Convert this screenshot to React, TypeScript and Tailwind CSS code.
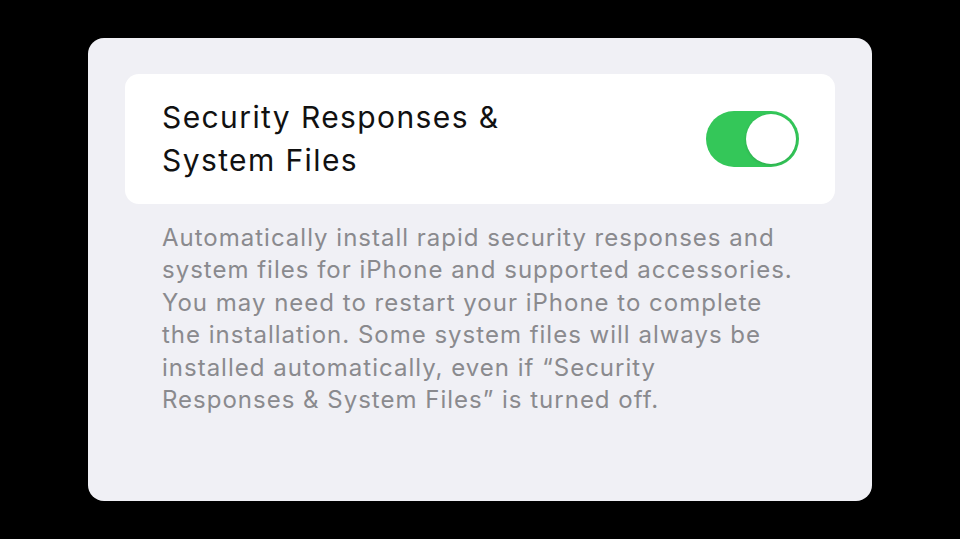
import { useState } from 'react';

function Toggle({ on, onChange }: { on: boolean; onChange: (v: boolean) => void }) {
  return (
    <button
      type="button"
      onClick={() => onChange(!on)}
      className={`relative flex h-[56px] w-[93px] shrink-0 items-center rounded-full p-[3px] transition-colors ${
        on ? 'bg-[#34c759] justify-end' : 'bg-[#e5e5ea] justify-start'
      }`}
    >
      <span className="block h-[50px] w-[50px] rounded-full bg-white shadow-[0_1px_3px_rgba(0,0,0,0.15)]" />
    </button>
  );
}

export default function App() {
  const [enabled, setEnabled] = useState(true);

  return (
    <div className="flex h-[539px] w-[960px] items-start justify-center bg-black pt-[38px]" style={{ fontFamily: 'Inter, "Noto Sans", sans-serif' }}>
      <div className="h-[463px] w-[784px] rounded-[16px] bg-[#f0f0f5] px-[37px] pt-[36px]">
        <div className="flex h-[130px] items-center justify-between rounded-[14px] bg-white pl-[37px] pr-[36px]">
          <h1 className="text-[30px] leading-[43px] tracking-[1.4px] text-[#111]">
            Security Responses &amp;
            <br />
            System Files
          </h1>
          <Toggle on={enabled} onChange={setEnabled} />
        </div>

        <p className="mt-[18px] pl-[37px] pr-[10px] text-[24px] leading-[32.4px] tracking-[1px] text-[#8a8a8e]">
          Automatically install rapid security responses and
          <br />
          system files for iPhone and supported accessories.
          <br />
          You may need to restart your iPhone to complete
          <br />
          the installation. Some system files will always be
          <br />
          installed automatically, even if “Security
          <br />
          Responses &amp; System Files” is turned off.
        </p>
      </div>
    </div>
  );
}
